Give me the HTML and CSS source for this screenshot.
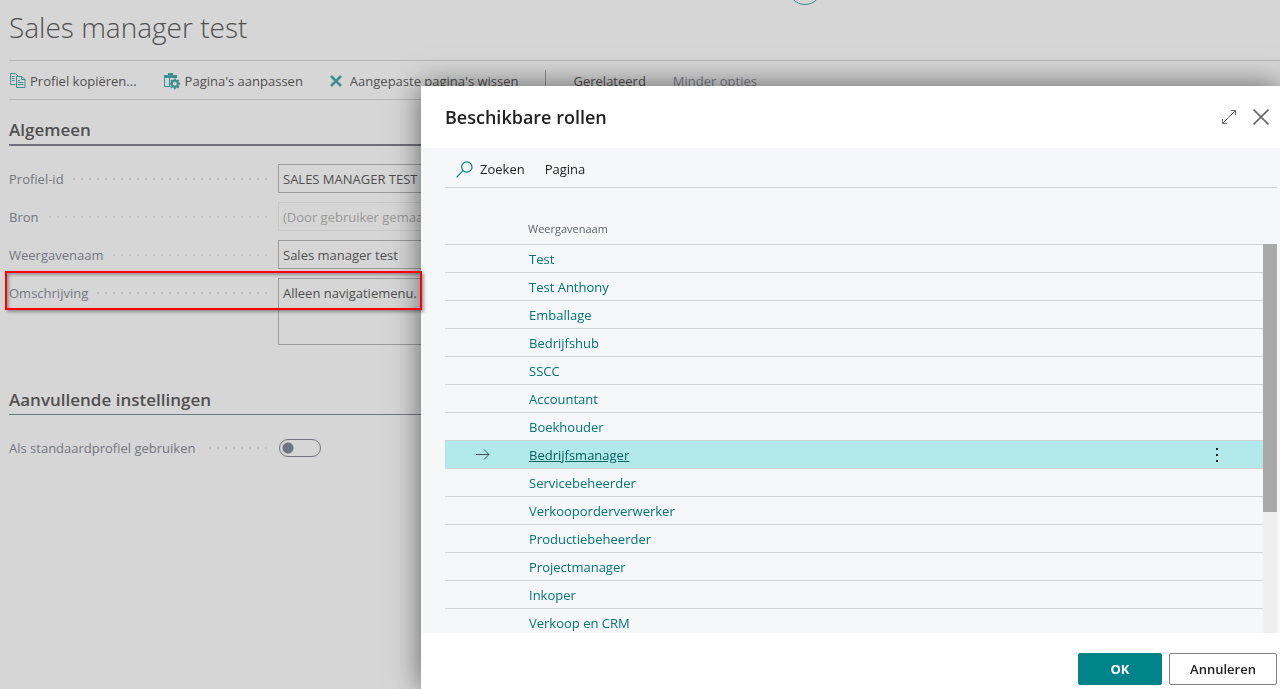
FILE: index.html
```html
<!DOCTYPE html>
<html lang="nl">
<head>
<meta charset="utf-8">
<title>Sales manager test</title>
<link rel="stylesheet" href="styles.css">
</head>
<body>
<main class="page">
  <span class="round-action"></span>
  <h1 class="page-title">Sales manager test</h1>
  <div class="action-bar">
    <button class="action" type="button">
      <svg class="icon icon-copy" width="16" height="16" viewBox="0 0 16 16" fill="none" stroke="currentColor">
        <path d="M5.5 11.5h-5v-11h5l2 2v1M2 3.5h2.500M2 5.500h2.500M2 7.500h2.500"/>
        <path d="M6.500 3.500h5.500l3 3v8h-8.500zM11.500 3.500v3h3.500M8 7.500h2M8 9.500h5.500M8 11.500h5.500"/>
      </svg>
      Profiel kopiëren...
    </button>
    <button class="action" type="button">
      <svg class="icon" width="17" height="17" viewBox="0 0 17 17" fill="none" stroke="currentColor">
        <path d="M0 2h4V0h5v2h4v3H0z" fill="currentColor" stroke="none"/>
        <path d="M.5 4.500v9h6M5.500 4.500v9"/>
        <circle cx="10.800" cy="10.800" r="3" stroke-width="2"/>
        <path d="M10.800 5.500v2M10.800 14v2.200M5.500 10.800h2M14 10.800h2.200M7 7l1.500 1.500M13.200 13.200l1.500 1.500M7 14.600l1.500-1.500M13.200 8.400l1.500-1.500" stroke-width="2"/>
      </svg>
      Pagina's aanpassen
    </button>
    <button class="action action-clear" type="button">
      <svg class="icon" width="12" height="12" viewBox="0 0 12 12" fill="none" stroke="currentColor" stroke-width="2.600">
        <path d="M1 1l10 10M11 1L1 11"/>
      </svg>
      Aangepaste pagina's wissen
    </button>
    <span class="divider"></span>
    <button class="action" type="button">Gerelateerd</button>
    <button class="action action-muted" type="button">Minder opties</button>
  </div>

  <section class="group">
    <h2 class="group-title group-title-strong">Algemeen</h2>
    <div class="field">
      <label class="field-label" for="profile-id">Profiel-id</label>
      <input class="field-input" id="profile-id" value="SALES MANAGER TEST">
    </div>
    <div class="field">
      <label class="field-label" for="source">Bron</label>
      <input class="field-input" id="source" value="(Door gebruiker gemaakt)" disabled>
    </div>
    <div class="field">
      <label class="field-label" for="display-name">Weergavenaam</label>
      <input class="field-input" id="display-name" value="Sales manager test">
    </div>
    <div class="field field-marked">
      <label class="field-label" for="description">Omschrijving</label>
      <textarea class="field-input field-area" id="description">Alleen navigatiemenu.</textarea>
      <span class="marker"></span>
    </div>
  </section>

  <section class="group group-extra">
    <h2 class="group-title">Aanvullende instellingen</h2>
    <div class="field field-switch">
      <label class="field-label" for="default-profile">Als standaardprofiel gebruiken</label>
      <input class="toggle" id="default-profile" type="checkbox" role="switch">
    </div>
  </section>
</main>

<div class="dialog" role="dialog" aria-labelledby="dialog-title">
  <header class="dialog-header">
    <h2 class="dialog-title" id="dialog-title">Beschikbare rollen</h2>
    <button class="icon-button" type="button" aria-label="Vergroten">
      <svg class="icon" width="16" height="16" viewBox="0 0 16 16" fill="none" stroke="currentColor">
        <path d="M1.500 14.500l13-13M10 1.500h4.500V6M1.500 10v4.500H6"/>
      </svg>
    </button>
    <button class="icon-button" type="button" aria-label="Sluiten">
      <svg class="icon" width="16" height="16" viewBox="0 0 16 16" fill="none" stroke="currentColor" stroke-width="1.600">
        <path d="M.5.500l15 15M15.500.500l-15 15"/>
      </svg>
    </button>
  </header>
  <div class="dialog-body">
    <div class="dialog-tools">
      <button class="tool" type="button">
        <svg class="icon icon-search" width="17" height="17" viewBox="0 0 17 17" fill="none" stroke="currentColor" stroke-width="1.200">
          <circle cx="10.800" cy="6" r="5.200"/><path d="M7 9.700L.5 16.300"/>
        </svg>
        Zoeken
      </button>
      <button class="tool" type="button">Pagina</button>
    </div>
    <div class="list">
      <table class="roles">
        <thead>
          <tr><th class="col-mark"></th><th class="col-name">Weergavenaam</th><th class="col-menu"></th></tr>
        </thead>
        <tbody>
          <tr><td></td><td><a class="role" href="#">Test</a></td><td></td></tr>
          <tr><td></td><td><a class="role" href="#">Test Anthony</a></td><td></td></tr>
          <tr><td></td><td><a class="role" href="#">Emballage</a></td><td></td></tr>
          <tr><td></td><td><a class="role" href="#">Bedrijfshub</a></td><td></td></tr>
          <tr><td></td><td><a class="role" href="#">SSCC</a></td><td></td></tr>
          <tr><td></td><td><a class="role" href="#">Accountant</a></td><td></td></tr>
          <tr><td></td><td><a class="role" href="#">Boekhouder</a></td><td></td></tr>
          <tr class="selected">
            <td class="cell-mark"><svg class="icon" width="14" height="12" viewBox="0 0 14 12" fill="none" stroke="currentColor"><path d="M0 5.500h13M8 .5l5 5-5 5"/></svg></td>
            <td><a class="role" href="#">Bedrijfsmanager</a></td>
            <td class="cell-menu"><button class="icon-button row-menu" type="button" aria-label="Meer opties"><svg class="icon" width="2" height="14" viewBox="0 0 2 14" fill="currentColor"><path d="M0 0h2v2H0zM0 6h2v2H0zM0 12h2v2H0z"/></svg></button></td>
          </tr>
          <tr><td></td><td><a class="role" href="#">Servicebeheerder</a></td><td></td></tr>
          <tr><td></td><td><a class="role" href="#">Verkooporderverwerker</a></td><td></td></tr>
          <tr><td></td><td><a class="role" href="#">Productiebeheerder</a></td><td></td></tr>
          <tr><td></td><td><a class="role" href="#">Projectmanager</a></td><td></td></tr>
          <tr><td></td><td><a class="role" href="#">Inkoper</a></td><td></td></tr>
          <tr><td></td><td><a class="role" href="#">Verkoop en CRM</a></td><td></td></tr>
        </tbody>
      </table>
      <div class="scrollbar"><div class="scrollbar-thumb"></div></div>
    </div>
  </div>
  <footer class="dialog-footer">
    <button class="button button-primary" type="button">OK</button>
    <button class="button" type="button">Annuleren</button>
  </footer>
</div>
</body>
</html>
```

FILE: styles.css
```css
* {
  box-sizing: border-box;
}

body {
  margin: 0;
  height: 100vh;
  overflow: hidden;
  background: #d6d6d6;
  color: #505050;
  font: 13px/20px "Segoe UI", "Open Sans", "Noto Sans", sans-serif;
}

button,
input,
textarea {
  margin: 0;
  font: inherit;
  color: inherit;
}

button {
  padding: 0;
  border: 0;
  background: none;
}

.icon {
  display: block;
  flex: none;
}

/* Page behind the dialog */
.page {
  padding-left: 9px;
}

.round-action {
  position: absolute;
  left: 788px;
  top: -29px;
  width: 34px;
  height: 34px;
  border: 1px solid #3c8f92;
  border-radius: 50%;
}

.page-title {
  margin: 0;
  padding: 7px 0 13px;
  font-size: 28px;
  line-height: 40px;
  font-weight: 300;
}

.action-bar {
  display: flex;
  align-items: center;
  gap: 27px;
  height: 40px;
  padding: 2px 0 0 1px;
  border: solid #b5b5b5;
  border-width: 1px 0;
  white-space: nowrap;
}

.action {
  display: flex;
  align-items: center;
  gap: 4px;
}

.action .icon {
  color: #3c8f92;
}

.action-clear {
  gap: 8px;
}

.action-muted {
  color: #7b7f88;
}

.divider {
  width: 1px;
  height: 22px;
  background: #8d9098;
}

.group {
  padding-top: 19px;
}

.group-extra {
  padding-top: 44px;
}

.group-title {
  margin: 0 0 18px;
  padding-bottom: 4px;
  border-bottom: 1px solid #6b7a7e;
  font-size: 17px;
  line-height: 21px;
  font-weight: 600;
}

.group-title-strong {
  border-bottom: 2px solid #6e6f7c;
}

.field {
  display: grid;
  grid-template-columns: 269px 300px;
  align-items: start;
}

.field + .field {
  margin-top: 9px;
}

.field-switch {
  align-items: center;
}

.field-marked {
  position: relative;
}

.field-label {
  display: flex;
  gap: 8px;
  padding: 5px 11px 4px 0;
  color: #737781;
  white-space: nowrap;
}

.field-label::after {
  content: "";
  flex: 1;
  background: repeating-linear-gradient(to left, #c2c2c2 0 2px, transparent 2px 8px) right center / 100% 2px no-repeat;
}

.field-input {
  width: 100%;
  height: 29px;
  padding: 4px;
  border: 1px solid #9b9b9b;
  border-radius: 0;
  background: transparent;
  outline: 0;
}

.field-input:disabled {
  border-color: #c9c9c9;
  color: #989898;
}

.field-area {
  display: block;
  height: 67px;
  resize: none;
  overflow: hidden;
}

/* Highlight frame over the description row */
.marker {
  position: absolute;
  z-index: 2;
  top: -7px;
  left: -4px;
  width: 417px;
  height: 39px;
  border: 2px solid #f00;
  box-shadow: 2px 2px 3px rgba(0, 0, 0, 0.35), inset 2px 2px 3px rgba(0, 0, 0, 0.3);
  pointer-events: none;
}

.toggle {
  appearance: none;
  width: 42px;
  height: 18px;
  margin: 0 1px;
  border: 1px solid #70747f;
  border-radius: 9px;
  background: radial-gradient(circle at 8px 8px, #70747f 5px, transparent 6px);
}

/* Dialog */
.dialog {
  position: fixed;
  z-index: 1;
  top: 86px;
  right: 0;
  bottom: 0;
  left: 421px;
  display: flex;
  flex-direction: column;
  background: #fff;
  color: #212121;
  box-shadow: 0 0 28px rgba(0, 0, 0, 0.55);
}

.dialog-header {
  display: flex;
  align-items: center;
  gap: 16px;
  height: 62px;
  padding: 0 11px 0 24px;
  color: #666;
}

.dialog-title {
  flex: 1;
  margin: 0;
  color: #212121;
  font-size: 18px;
  line-height: 24px;
  font-weight: 600;
}

.dialog-body {
  display: flex;
  flex: 1;
  flex-direction: column;
  min-height: 0;
  padding: 0 3px 0 24px;
  background: #f5f7f9;
}

.dialog-tools {
  display: flex;
  align-items: center;
  flex: none;
  gap: 20px;
  height: 40px;
  padding: 3px 0 0 11px;
  border-bottom: 1px solid #d0d4d9;
}

.tool {
  display: flex;
  align-items: center;
  gap: 7px;
}

.icon-search {
  color: #00848a;
}

.list {
  display: flex;
  flex: 1;
  align-items: start;
  min-height: 0;
  overflow: hidden;
}

.roles {
  flex: 1;
  table-layout: fixed;
  border-spacing: 0;
}

.roles th {
  height: 57px;
  padding: 25px 0 0;
  border-bottom: 1px solid #d0d4d9;
  color: #5b6472;
  font-size: 11px;
  line-height: 16px;
  font-weight: 400;
  text-align: left;
}

.roles td {
  height: 28px;
  padding: 0 0 0 1px;
  border-bottom: 1px solid #d0d4d9;
}

.roles .col-mark {
  width: 83px;
}

.roles .col-menu {
  width: 91px;
}

.role {
  display: block;
  color: #00757b;
  text-decoration: none;
}

.selected td {
  background: #b2e9eb;
}

.selected .role {
  color: #075e63;
  text-decoration: underline;
}

.roles .cell-mark {
  padding-left: 31px;
  color: #454f52;
}

.roles .cell-menu {
  padding-left: 44px;
}

.row-menu {
  display: block;
}

.scrollbar {
  align-self: stretch;
  width: 14px;
  margin-top: 56px;
  background: #efefef;
}

.scrollbar-thumb {
  height: 69%;
  background: #a9a9a9;
}

.dialog-footer {
  display: flex;
  align-items: center;
  justify-content: flex-end;
  gap: 7px;
  height: 56px;
  padding: 16px 3px 0 0;
}

.button {
  width: 108px;
  height: 32px;
  border: 1px solid #808080;
  border-radius: 2px;
  font-weight: 600;
}

.button-primary {
  width: 84px;
  border-color: #00848a;
  background: #00848a;
  color: #fff;
  font-weight: 700;
}
```
